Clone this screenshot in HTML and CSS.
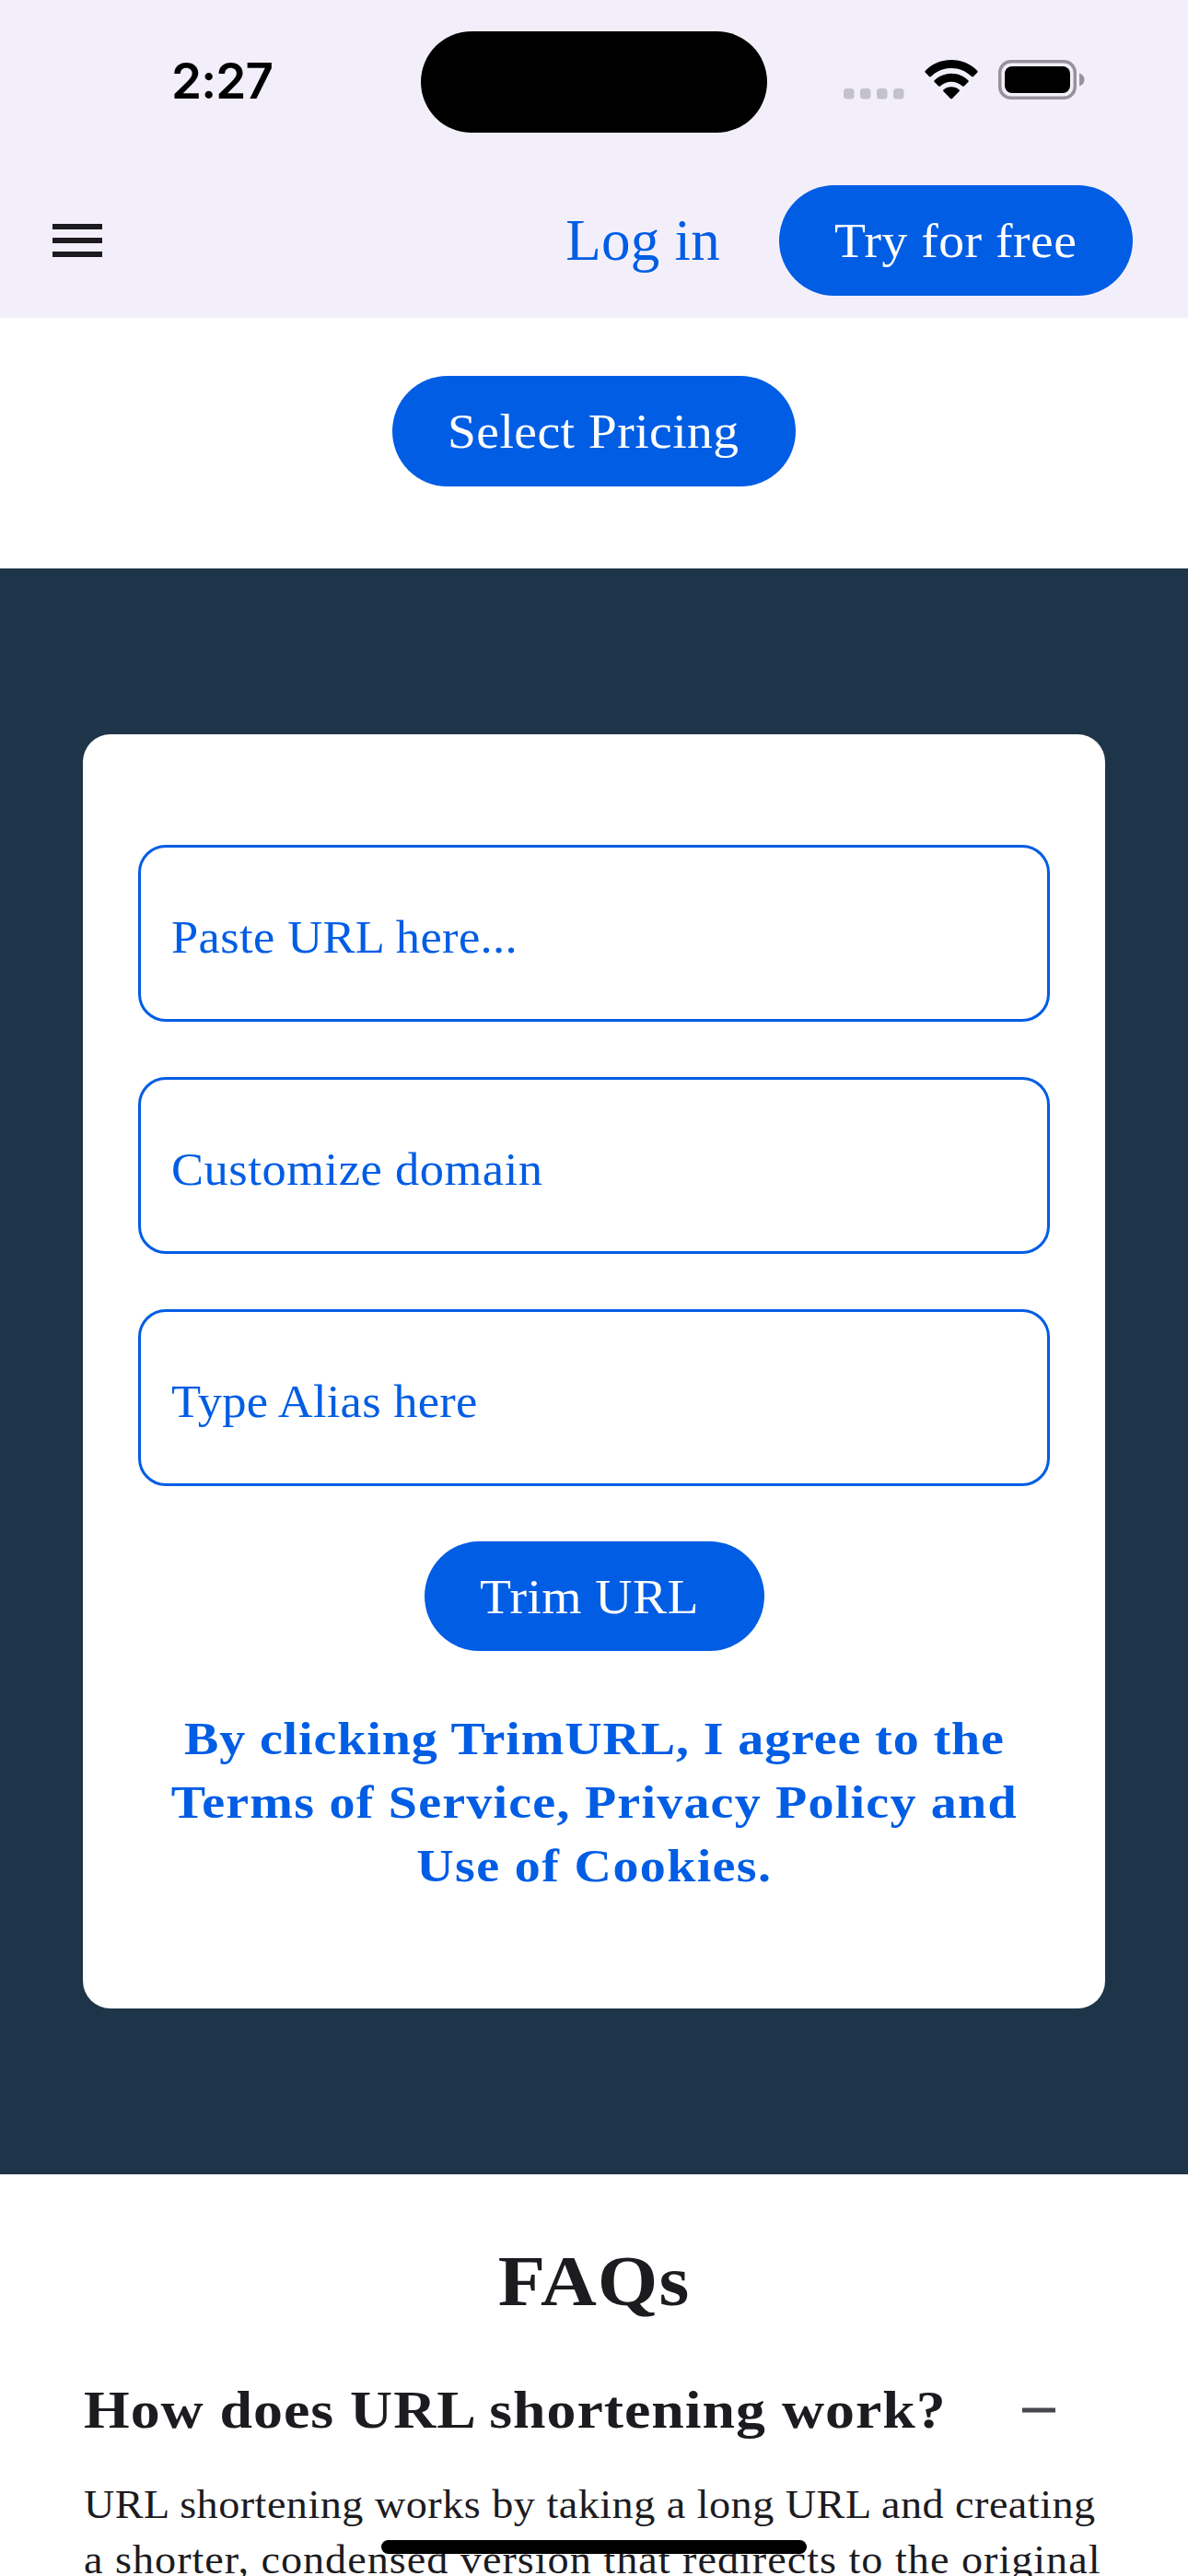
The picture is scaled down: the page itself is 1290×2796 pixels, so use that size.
FILE: index.html
```html
<!DOCTYPE html>
<html lang="en">
<head>
<meta charset="utf-8">
<title>TrimURL</title>
<link rel="stylesheet" href="styles.css">
</head>
<body>
<div class="screen">
  <div class="status">
    <div class="time">2:27</div>
    <div class="island"></div>
    <div class="indicators">
      <svg class="dots" viewBox="0 0 66 12"><g fill="#c3c1cc"><rect x="0" y="0" width="11.5" height="11.5" rx="3.5"/><rect x="18" y="0" width="11.5" height="11.5" rx="3.5"/><rect x="36" y="0" width="11.5" height="11.5" rx="3.5"/><rect x="54" y="0" width="11.5" height="11.5" rx="3.5"/></g></svg>
      <svg class="wifi" viewBox="0 0 58 43"><path d="M29 0C40 0 50 4.200 57.200 11.800C57.800 12.400 57.800 13.200 57.200 13.800L53 18C52.500 18.600 51.600 18.600 51 18C45 12.200 37.300 9 29 9S13 12.200 7 18C6.400 18.600 5.500 18.600 5 18L.8 13.800C.2 13.200.2 12.400.8 11.800C8 4.200 18 0 29 0Z"/><path d="M29 14.700C36 14.700 42.500 17.400 47.300 22.200C47.900 22.800 47.900 23.500 47.300 24.100L42.900 28.400C42.300 29 41.600 29 41 28.500C37.700 25.400 33.500 23.700 29 23.700S20.300 25.400 17 28.500C16.400 29 15.700 29 15.100 28.400L10.700 24.100C10.100 23.500 10.100 22.800 10.700 22.200C15.500 17.400 22 14.700 29 14.700Z"/><path d="M29 29.200C32.200 29.200 35.200 30.400 37.500 32.400C38.100 32.900 38.100 33.600 37.500 34.200L30 41.900C29.400 42.500 28.600 42.500 28 41.900L20.500 34.200C19.900 33.600 19.900 32.900 20.500 32.400C22.800 30.400 25.800 29.200 29 29.200Z"/></svg>
      <svg class="battery" viewBox="0 0 95 43"><rect x="1.750" y="1.750" width="81.500" height="39.500" rx="12" fill="none" stroke="#96939b" stroke-width="3.500"/><rect x="7" y="7" width="71" height="29" rx="8"/><path d="M88 14.500C91 15.500 93.500 18 93.500 21.500S91 27.500 88 28.500Z" fill="#96939b"/></svg>
    </div>
  </div>
  <header class="nav">
    <svg class="menu" viewBox="0 0 54 36"><path fill="#1c1b1f" d="M0 0h54v6H0zM0 15h54v6H0zM0 30h54v6H0z"/></svg>
    <a class="login">Log in</a>
    <a class="btn btn-try"><span>Try for free</span></a>
  </header>
  <section class="pricing"><a class="btn btn-pricing"><span>Select Pricing</span></a></section>
  <section class="trim">
    <form class="card">
      <div class="field paste"><span>Paste URL here...</span></div>
      <div class="field domain"><span>Customize domain</span></div>
      <div class="field alias"><span>Type Alias here</span></div>
      <a class="btn btn-trim"><span>Trim URL</span></a>
      <p class="terms"><span class="t1">By clicking TrimURL, I agree to the</span><span class="t2">Terms of Service, Privacy Policy and</span><span class="t3">Use of Cookies.</span></p>
    </form>
  </section>
  <section class="faq">
    <h1>FAQs</h1>
    <div class="question">
      <h2>How does URL shortening work?</h2>
      <svg class="minus" viewBox="0 0 36 6"><path fill="#49454f" d="M0 .5h36v5H0z"/></svg>
    </div>
    <p class="answer"><span class="a1">URL shortening works by taking a long URL and creating</span><span class="a2">a shorter, condensed version that redirects to the original</span></p>
  </section>
  <div class="home-indicator"></div>
</div>
</body>
</html>
```
FILE: styles.css
```css
* { box-sizing: border-box; }
body {
  margin: 0;
  font-family: Georgia, "Liberation Serif", serif;
  color: #1c1b1f;
  background: #fff;
}
.screen {
  position: relative;
  width: 1290px;
  height: 2796px;
  overflow: hidden;
}
h1, h2, p { margin: 0; }

/* status bar */
.status {
  display: grid;
  grid-template-columns: 457px 376px 457px;
  height: 177px;
  background: #f3effa;
}
.time {
  padding: 58px 0 0 186px;
  font: 600 53px/60px Inter, sans-serif;
  letter-spacing: -0.8px;
  color: #000;
}
.island {
  height: 110px;
  margin-top: 34px;
  border-radius: 55px;
  background: #000;
}
.indicators {
  display: flex;
  align-items: flex-start;
  padding: 65px 0 0 83px;
}
.indicators svg { display: block; }
.dots { width: 66px; height: 12px; margin-top: 31px; }
.wifi { width: 58px; height: 43px; margin-left: 22px; }
.battery { width: 95px; height: 43px; margin-left: 22px; }

/* top navigation */
.nav {
  display: flex;
  align-items: center;
  height: 168px;
  padding: 0 60px 0 57px;
  background: #f3effa;
}
.menu { width: 54px; height: 36px; }
.login {
  margin: 0 64px 0 auto;
  font-size: 63px;
  line-height: 72px;
  letter-spacing: 0.25px;
  color: #005de4;
}
.btn {
  display: flex;
  align-items: center;
  height: 120px;
  padding-left: 60px;
  border-radius: 60px;
  background: #005de4;
  color: #fff;
  font-size: 53px;
  line-height: 60px;
  white-space: nowrap;
}
.btn span, .field span, .answer span {
  display: block;
  transform: scaleX(1.05);
  transform-origin: left;
}
.btn-try { width: 384px; letter-spacing: 0.46px; }
.btn-pricing { width: 438px; letter-spacing: 0.4px; }
.btn-trim { width: 369px; letter-spacing: 0.4px; }

.pricing {
  display: flex;
  justify-content: center;
  height: 272px;
  padding-top: 63px;
}

/* shortener form */
.trim {
  height: 1743px;
  padding: 180px 90px;
  background: #1e3448;
}
.card {
  display: flex;
  flex-direction: column;
  align-items: center;
  gap: 60px;
  height: 1383px;
  padding: 120px 60px;
  border-radius: 30px;
  background: #fff;
}
.field {
  width: 990px;
  height: 192px;
  padding: 4px 0 0 33px;
  border: 3px solid #005de4;
  border-radius: 30px;
  color: #005de4;
  font-size: 50px;
  line-height: 186px;
}
.paste { letter-spacing: 0.35px; }
.domain { letter-spacing: 0.5px; }
.alias { letter-spacing: 0.25px; }
.terms {
  padding-top: 1px;
  color: #005de4;
  font-size: 50px;
  font-weight: bold;
  line-height: 69px;
  text-align: center;
  white-space: nowrap;
}
.terms span { display: block; transform: scaleX(1.12); }
.t1 { letter-spacing: 0.78px; }
.t2 { letter-spacing: 1.09px; }
.t3 { letter-spacing: 1.23px; }

/* questions */
.faq { padding: 71px 90px 0; }
h1 {
  font-size: 78px;
  line-height: 90px;
  text-align: center;
  letter-spacing: 1px;
  transform: scaleX(1.08);
}
.question {
  display: flex;
  align-items: center;
  justify-content: space-between;
  height: 90px;
  margin-top: 50px;
  padding: 0 54px 0 1px;
}
h2 {
  font-size: 57px;
  line-height: 66px;
  letter-spacing: 0.88px;
  transform: scaleX(1.12);
  transform-origin: left;
}
.minus { width: 36px; height: 6px; }
.answer {
  margin-top: 28px;
  padding-left: 1px;
  font-size: 44px;
  line-height: 60px;
  white-space: nowrap;
}
.a1 { letter-spacing: 0.45px; }
.a2 { letter-spacing: 0.94px; }

.home-indicator {
  position: absolute;
  left: 414px;
  top: 2757px;
  width: 462px;
  height: 15px;
  border-radius: 8px;
  background: #000;
}
```
